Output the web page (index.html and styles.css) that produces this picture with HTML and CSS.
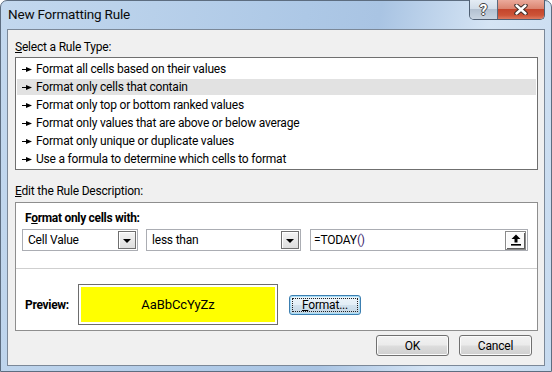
FILE: index.html
```html
<!DOCTYPE html>
<html lang="en">
<head>
  <meta charset="UTF-8" />
  <title>New Formatting Rule</title>
  <link rel="stylesheet" href="styles.css">
</head>
<body>
  <div class="window">
    <div class="titlebar">
      <span class="title">New Formatting Rule</span>
      <div class="caption-btns">
        <span class="cap-btn help">?</span>
        <span class="cap-btn close">
          <svg width="14" height="11" viewBox="0 0 14 11">
            <path d="M2.5 1.5 L11.5 9.5 M11.5 1.5 L2.5 9.5" stroke="#3b2a26" stroke-width="4.4" stroke-linecap="round"/>
            <path d="M2.5 1.5 L11.5 9.5 M11.5 1.5 L2.5 9.5" stroke="#fff" stroke-width="2.4" stroke-linecap="round"/>
          </svg>
        </span>
      </div>
    </div>

    <div class="client">
      <div class="label"><u>S</u>elect a Rule Type:</div>
      <ul class="rule-list">
        <li><svg class="bullet" width="10" height="5" viewBox="0 0 10 5"><path d="M0 2.5 H5" stroke="#000" stroke-width="1"/><path d="M4 0 L10 2.5 L4 5 Z" fill="#000"/></svg>Format all cells based on their values</li>
        <li class="selected"><svg class="bullet" width="10" height="5" viewBox="0 0 10 5"><path d="M0 2.5 H5" stroke="#000" stroke-width="1"/><path d="M4 0 L10 2.5 L4 5 Z" fill="#000"/></svg>Format only cells that contain</li>
        <li><svg class="bullet" width="10" height="5" viewBox="0 0 10 5"><path d="M0 2.5 H5" stroke="#000" stroke-width="1"/><path d="M4 0 L10 2.5 L4 5 Z" fill="#000"/></svg>Format only top or bottom ranked values</li>
        <li><svg class="bullet" width="10" height="5" viewBox="0 0 10 5"><path d="M0 2.5 H5" stroke="#000" stroke-width="1"/><path d="M4 0 L10 2.5 L4 5 Z" fill="#000"/></svg>Format only values that are above or below average</li>
        <li><svg class="bullet" width="10" height="5" viewBox="0 0 10 5"><path d="M0 2.5 H5" stroke="#000" stroke-width="1"/><path d="M4 0 L10 2.5 L4 5 Z" fill="#000"/></svg>Format only unique or duplicate values</li>
        <li><svg class="bullet" width="10" height="5" viewBox="0 0 10 5"><path d="M0 2.5 H5" stroke="#000" stroke-width="1"/><path d="M4 0 L10 2.5 L4 5 Z" fill="#000"/></svg>Use a formula to determine which cells to format</li>
      </ul>

      <div class="label label-edit"><u>E</u>dit the Rule Description:</div>
      <div class="desc">
        <div class="desc-top">
          <div class="desc-title">F<u>o</u>rmat only cells with:</div>
          <div class="cond-row">
            <div class="combo combo-type"><span>Cell Value</span><span class="drop-btn"></span></div>
            <div class="combo combo-op"><span>less than</span><span class="drop-btn"></span></div>
            <div class="combo formula">
              <span>=TODAY<span class="paren">()</span></span>
              <span class="ref-btn">
                <svg width="10" height="12" viewBox="0 0 10 12">
                  <path d="M5 0.5 L9.5 5 H6.5 V8.5 H3.5 V5 H0.5 Z" fill="#000"/>
                  <rect x="0" y="10" width="10" height="1.6" fill="#000"/>
                </svg>
              </span>
            </div>
          </div>
        </div>
        <div class="desc-preview">
          <span class="preview-label">Preview:</span>
          <div class="preview-box"><div class="swatch">AaBbCcYyZz</div></div>
          <button class="btn btn-format"><span class="focus-ring"><u>F</u>ormat...</span></button>
        </div>
      </div>

      <div class="buttons">
        <button class="btn">OK</button>
        <button class="btn">Cancel</button>
      </div>
    </div>
  </div>
</body>
</html>
```

FILE: styles.css
```css
:root {
  --frame-line:#5d6d80;
  --client-bg: #f0f0f0;
  --ui-font:   "Segoe UI", Roboto, sans-serif;
}

* { margin: 0; padding: 0; box-sizing: border-box; }
html, body {
  width: 100%;
  height: 100%;
  background: #fff;
  overflow: hidden;
}

body {
  font-family: var(--ui-font);
  font-size: 12px;
  letter-spacing: -0.2px;
  color: #000;
}

.window {
  width: 552px;
  height: 372px;
  border: 1px solid var(--frame-line);
  border-radius: 7px 7px 0 0;
  background: linear-gradient(100deg, #c3d8ee 0%, #adc8e6 50%, #a9c4e3 62%, #d5e4f4 80%, #c6daef 100%);
  display: flex;
  flex-direction: column;
}

/* title bar */
.titlebar {
  height: 28px;
  display: flex;
  justify-content: space-between;
  align-items: flex-start;
  padding-left: 7px;
}

.title {
  font-size: 13.5px;
  line-height: 27px;
  color: #0b0b0b;
}

.caption-btns {
  display: flex;
  margin-top: -1px;
  margin-right: 6px;
  border: 1px solid #4f5f73;
  border-top: none;
  border-radius: 0 0 5px 5px;
  overflow: hidden;
}

.cap-btn {
  height: 19px;
  display: flex;
  align-items: center;
  justify-content: center;
}

.help {
  width: 28px;
  border-right: 1px solid #5a6a7e;
  background: linear-gradient(#e4ecf4 0%, #d2dde9 45%, #b3c1d1 50%, #c8d4e1 100%);
  color: #fff;
  font-weight: bold;
  font-size: 15px;
  text-shadow: 1px 0 0 #454545, -1px 0 0 #454545, 0 1px 0 #454545, 0 -1px 0 #454545;
}

.close {
  width: 46px;
  background: linear-gradient(#ebaa9b 0%, #db8470 45%, #c4452c 50%, #cd5337 80%, #dd7a60 100%);
}

/* client area */
.client {
  flex: 1;
  margin: 0 6px 5px;
  border: 1px solid #7b8898;
  background: var(--client-bg);
  padding: 8px 6px 0 7px;
}

.label {
  height: 18px;
  line-height: 18px;
}

.label-edit { margin-top: 12px; }

.rule-list {
  list-style: none;
  margin-top: 1px;
  border: 1px solid #6f6f6f;
  background: #fff;
  padding: 3px 1px 0;
}

.rule-list li {
  height: 16px;
  margin-bottom: 2px;
  padding-left: 5px;
  display: flex;
  align-items: center;
  gap: 4px;
  white-space: nowrap;
}

.rule-list li.selected { background: #e2e2e2; }

.bullet { flex: none; }

.desc {
  margin-top: 2px;
  border: 1px solid #8e8e8e;
  background: #fff;
}

.desc-top {
  height: 66px;
  border-bottom: 1px solid #cfcfcf;
  padding: 6px 0 0 9px;
}

.desc-title {
  font-weight: bold;
  letter-spacing: -0.3px;
  height: 18px;
  line-height: 18px;
}

.cond-row {
  display: flex;
  margin: 2px 0 0 -3px;
}

.combo {
  height: 22px;
  border: 1px solid #abadb3;
  background: #fff;
  display: flex;
  align-items: center;
  justify-content: space-between;
  padding: 0 1px 0 5px;
}

.combo-type { width: 116px; }
.combo-op   { width: 155px; margin-left: 8px; }
.formula    { width: 218px; margin-left: 9px; padding-left: 3px; }

.paren { color: #3a1f6e; }

.drop-btn {
  width: 18px;
  height: 18px;
  border: 1px solid #6f6f6f;
  background: linear-gradient(#f4f4f4, #dedede);
  box-shadow: inset 1px 1px 0 #fff;
  display: flex;
  align-items: center;
  justify-content: center;
}

.drop-btn::after {
  content: "";
  border-left: 4px solid transparent;
  border-right: 4px solid transparent;
  border-top: 4px solid #000;
  margin-top: 1px;
}

.ref-btn {
  width: 21px;
  height: 19px;
  border: 1px solid #8a8a8a;
  background: #fafafa;
  box-shadow: inset 1px 1px 0 #fff, inset -1px -1px 0 #5c5c5c;
  display: flex;
  align-items: center;
  justify-content: center;
}

.desc-preview {
  display: flex;
  align-items: center;
  padding: 15px 0 5px 9px;
}

.preview-label {
  font-weight: bold;
  letter-spacing: -0.3px;
  width: 53px;
}

.preview-box {
  width: 200px;
  height: 41px;
  border: 1px solid #6d6d6d;
  padding: 2px;
}

.swatch {
  height: 100%;
  background: #ffff00;
  display: flex;
  align-items: center;
  justify-content: center;
  font-size: 13px;
  letter-spacing: -0.1px;
}

/* push buttons */
.btn {
  width: 73px;
  height: 21px;
  border: 1px solid #707070;
  border-radius: 3px;
  background: linear-gradient(#f2f2f2 0%, #ebebeb 48%, #dddddd 52%, #cfcfcf 100%);
  box-shadow: inset 0 0 0 1px #fbfbfb;
  font-family: var(--ui-font);
  font-size: 12px;
  letter-spacing: -0.2px;
  color: #000;
}

.btn-format {
  width: 72px;
  height: 20px;
  margin-left: 11px;
  padding: 2px;
  border-color: #3c7fb1;
  box-shadow: inset 0 0 0 1px #a6dcf6;
  background: linear-gradient(#eef6fb 0%, #e3eef6 48%, #d2e2ee 52%, #c4d6e4 100%);
}

.focus-ring {
  display: block;
  height: 100%;
  border: 1px dotted #222;
  line-height: 13px;
}

.buttons {
  display: flex;
  justify-content: flex-end;
  gap: 10px;
  margin-top: 4px;
  padding-right: 6px;
}
```
